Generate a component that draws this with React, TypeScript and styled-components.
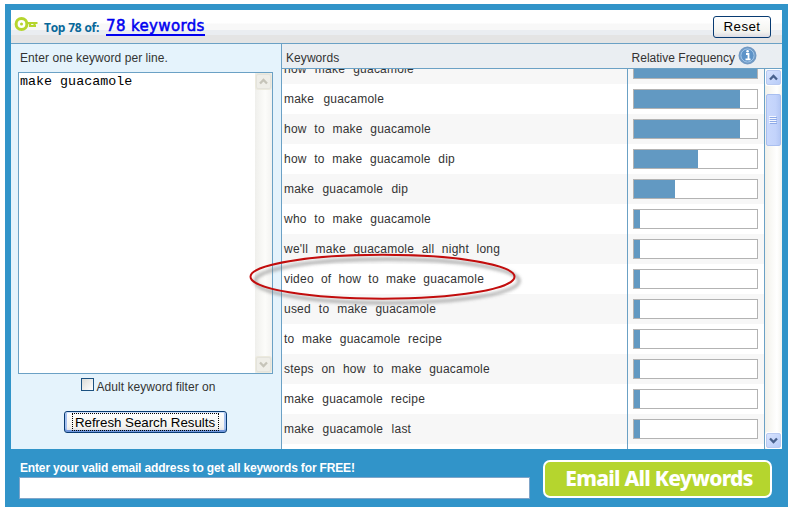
import React from 'react';
import styled, { createGlobalStyle } from 'styled-components';

const Global = createGlobalStyle`
  * { box-sizing: border-box; }
  body { margin: 0; background: #fff; font-family: "Liberation Sans", Arial, sans-serif; font-size: 12px; color: #333; overflow: hidden; }
  button, input, textarea { font: inherit; margin: 0; outline: none; }
`;

const Frame = styled.div`
  position: relative;
  width: 783px;
  height: 503px;
  margin: 4px 0 0 5px;
  padding: 6px 6px 0;
  background: #3194c9;
`;
const Header = styled.header`
  display: flex;
  align-items: center;
  height: 34px;
  padding: 0 11px 0 3px;
  border-bottom: 1px solid #6ba1c5;
  background: linear-gradient(#fff 0 13px, #f8f8f8 14px 20px, #eaedf1 20px 25px, #e4e4e4 25px);
`;
const KeyIcon = styled.svg`
  flex: none;
  width: 25px;
  height: 16px;
  margin-bottom: 5px;
`;
const Count = styled.span`
  margin: 2px 0 0 5px;
  width: 62px;
  font: bold 12px "Open Sans", sans-serif;
  letter-spacing: -0.3px;
  word-spacing: 0.3px;
  white-space: nowrap;
  color: #08689a;
`;
const CountLink = styled.a`
  margin-right: auto;
  padding-top: 1px;
  border-bottom: 2px solid #0000f0;
  font: 15px/16px "DejaVu Sans", sans-serif;
  letter-spacing: 0.36px;
  -webkit-text-stroke: 0.5px #0000f0;
  color: #0000f0;
  white-space: nowrap;
`;
const XpButton = styled.button<{ $focused?: boolean }>`
  display: flex;
  align-items: center;
  justify-content: center;
  width: ${p => (p.$focused ? 163 : 58)}px;
  height: 22px;
  margin-right: ${p => (p.$focused ? 2 : 0)}px;
  padding: 0;
  border: 1px solid #083b72;
  border-radius: 3px;
  background: linear-gradient(#fff, #f3f3ef 75%, #dcdbe2);
  box-shadow: ${p => (p.$focused ? 'inset 0 1px #cee0fb, inset 0 -2px #7096dc, inset 2px 0 #a7c2f0, inset -2px 0 #a7c2f0' : 'none')};
  font-size: 13.33px;
  letter-spacing: ${p => (p.$focused ? -0.03 : 0.45)}px;
  color: #000;
  white-space: nowrap;
`;
const FocusRing = styled.span`
  width: 147px;
  height: 18px;
  border: 1px dotted #000;
  line-height: 18px;
`;
const Main = styled.main`
  display: grid;
  grid-template: 405px / 270px 501px;
`;
const Query = styled.section`
  display: flex;
  flex-direction: column;
  align-items: center;
  background: #e5f3fc;
`;
const Hint = styled.label`
  align-self: flex-start;
  margin-left: 9px;
  height: 28px;
  line-height: 28px;
  letter-spacing: 0.07px;
`;
const Editor = styled.div`
  display: flex;
  align-self: flex-start;
  width: 255px;
  height: 302px;
  margin-left: 7px;
  border: 1px solid #6ba1c5;
  background: #fff;
`;
const EditorText = styled.textarea`
  flex: 1;
  min-width: 0;
  padding: 1px 0 0 1px;
  border: 0;
  resize: none;
  overflow: hidden;
  background: transparent;
  font: 13.33px/15px "Liberation Mono", monospace;
  letter-spacing: 0.02px;
  color: #000;
`;
const Track = styled.div<{ $disabled?: boolean }>`
  display: flex;
  flex-direction: column;
  justify-content: space-between;
  width: 17px;
  padding: 1px 0;
  background: ${p => (p.$disabled ? 'linear-gradient(90deg, #efefec, #fcfcfa 60%, #f2f2f0)' : 'linear-gradient(90deg, #f2f1ea, #fff 70%, #f4f4ef)')};
`;
const Arrow = styled.div<{ $disabled?: boolean }>`
  display: flex;
  flex: none;
  align-items: center;
  justify-content: center;
  width: 15px;
  height: 15px;
  margin: 0 1px;
  border: 1px solid ${p => (p.$disabled ? '#e4e3dc' : '#b9caf1')};
  border-radius: 2px;
  background: ${p => (p.$disabled ? '#efeee8' : 'linear-gradient(135deg, #d8e3fe, #b8ccf8)')};
  box-shadow: 0 0 0 1px ${p => (p.$disabled ? '#eceade' : '#fff')};
`;
const Thumb = styled.div`
  display: grid;
  place-content: center;
  gap: 1px;
  width: 15px;
  height: 52px;
  margin: 9px 1px auto;
  border: 1px solid #a9bff0;
  border-radius: 2px;
  background: linear-gradient(90deg, #c9d8fc, #c3d3fb 65%, #b5c8f5);
  i { width: 7px; height: 1px; background: #8fabe8; box-shadow: -1px -1px #f4f7ff; }
`;
const Filter = styled.label`
  display: flex;
  gap: 3px;
  height: 13px;
  margin: 4px 0 20px 4px;
  line-height: 19px;
  letter-spacing: 0.04px;
`;
const Check = styled.span`
  width: 13px;
  height: 13px;
  border: 1px solid #1c5180;
  background: linear-gradient(135deg, #dcdcd7, #fff);
`;
const Results = styled.section`
  display: flex;
  flex-direction: column;
  min-width: 0;
  border-left: 1px solid #6ba1c5;
`;
const ResultsHead = styled.div`
  display: flex;
  flex: none;
  justify-content: space-between;
  height: 25px;
  padding: 0 25px 0 4px;
  border-bottom: 1px solid #6ba1c5;
  background: #eaeef2;
  line-height: 28px;
  letter-spacing: 0.07px;
`;
const HeadCell = styled.div`
  display: flex;
  gap: 3px;
  letter-spacing: 0;
  svg { margin-top: 2px; }
`;
const ListArea = styled.div`
  display: flex;
  flex: 1;
  min-height: 0;
`;
const List = styled.div`
  width: 483px;
  border-right: 1px solid #6ba1c5;
  overflow: hidden;
`;
const Rows = styled.div`
  margin-top: -15px;
`;
const Row = styled.div`
  display: grid;
  grid-template-columns: 345px 1fr;
  height: 30px;
  background: #fff;
  &:nth-child(odd) { background: #f7f7f7; }
`;
const Term = styled.div<{ $gap: number }>`
  padding-left: 2px;
  line-height: 31px;
  letter-spacing: 0.22px;
  word-spacing: ${p => p.$gap}px;
  white-space: nowrap;
`;
const Meter = styled.div`
  padding: 5px 6px 5px 5px;
  border-left: 1px solid #6ba1c5;
`;
const Bar = styled.div`
  width: 125px;
  height: 20px;
  border: 1px solid #b3b3b3;
  background: #fff;
`;
const Fill = styled.div`
  height: 100%;
  background: #6299c2;
`;
const Footer = styled.footer`
  display: flex;
  justify-content: space-between;
  padding: 11px 10px 0 8px;
`;
const EmailLabel = styled.label`
  display: block;
  padding: 1px 0 0 1px;
  font-weight: bold;
  line-height: 14px;
  letter-spacing: -0.155px;
  color: #fff;
  white-space: nowrap;
`;
const EmailInput = styled.input`
  display: block;
  width: 511px;
  height: 22px;
  margin-top: 2px;
  border: 1px solid #7fa5c9;
  background: #fff;
`;
const EmailButton = styled.button`
  width: 229px;
  height: 38px;
  padding: 0 0 3px 3px;
  border: 2px solid #fff;
  border-radius: 7px;
  background: #b5d52e;
  font: 800 21px/30px "Noto Sans", sans-serif;
  letter-spacing: -0.75px;
  color: #fff;
  white-space: nowrap;
`;
const Callout = styled.svg`
  position: absolute;
  left: 240px;
  top: 244px;
  width: 290px;
  height: 62px;
  pointer-events: none;
`;

const Chevron = ({ down, muted }: { down?: boolean; muted?: boolean }) => (
  <svg width="9" height="7" viewBox="0 0 9 7">
    <path d={down ? 'M1 1.5 4.5 5 8 1.5' : 'M1 5.5 4.5 2 8 5.5'} fill="none" stroke={muted ? '#c6c4b9' : '#48618d'} strokeWidth="2.3" />
  </svg>
);

const terms: { text: string; value: number; gap: number }[] = [
  { text: 'how make guacamole', value: 123, gap: 4.6 },
  { text: 'make guacamole', value: 106, gap: 5.6 },
  { text: 'how to make guacamole', value: 106, gap: 4.1 },
  { text: 'how to make guacamole dip', value: 64, gap: 4 },
  { text: 'make guacamole dip', value: 41, gap: 4.7 },
  { text: 'who to make guacamole', value: 6, gap: 4.1 },
  { text: "we'll make guacamole all night long", value: 6, gap: 4 },
  { text: 'video of how to make guacamole', value: 6, gap: 3.6 },
  { text: 'used to make guacamole', value: 6, gap: 4.4 },
  { text: 'to make guacamole recipe', value: 6, gap: 4 },
  { text: 'steps on how to make guacamole', value: 6, gap: 4.1 },
  { text: 'make guacamole recipe', value: 6, gap: 4.5 },
  { text: 'make guacamole last', value: 6, gap: 4.8 },
];

export default function App() {
  return (
    <>
      <Global />
      <Frame>
        <Header>
          <KeyIcon viewBox="0 0 25 16">
            <circle cx="7.5" cy="8" r="5.4" fill="#fff" stroke="#b5d52e" strokeWidth="3" />
            <circle cx="7.5" cy="8" r="1.5" fill="#b5d52e" />
            <path d="M13 7h10.5M15.5 10h6.5M16 7v4M20.5 7v4" fill="none" stroke="#b5d52e" strokeWidth="2.2" />
          </KeyIcon>
          <Count>Top 78 of:</Count>
          <CountLink>78 keywords</CountLink>
          <XpButton>Reset</XpButton>
        </Header>
        <Main>
          <Query>
            <Hint>Enter one keyword per line.</Hint>
            <Editor>
              <EditorText defaultValue="make guacamole" spellCheck={false} />
              <Track $disabled>
                <Arrow $disabled><Chevron muted /></Arrow>
                <Arrow $disabled><Chevron down muted /></Arrow>
              </Track>
            </Editor>
            <Filter><Check />Adult keyword filter on</Filter>
            <XpButton $focused><FocusRing>Refresh Search Results</FocusRing></XpButton>
          </Query>
          <Results>
            <ResultsHead>
              <span>Keywords</span>
              <HeadCell>
                Relative Frequency
                <svg width="19" height="19" viewBox="0 0 19 19">
                  <circle cx="9.5" cy="9.5" r="8" fill="#5d93c8" stroke="#7199c3" strokeWidth="2" />
                  <circle cx="9.5" cy="9.5" r="6.6" fill="none" stroke="#a5c8e9" />
                  <path d="M8 8h2.5v5M7.5 13.3h5" fill="none" stroke="#fff" strokeWidth="1.8" />
                  <circle cx="9.6" cy="5.2" r="1.3" fill="#fff" />
                </svg>
              </HeadCell>
            </ResultsHead>
            <ListArea>
              <List>
                <Rows>
                  {terms.map(({ text, value, gap }) => (
                    <Row key={text}>
                      <Term $gap={gap}>{text}</Term>
                      <Meter><Bar><Fill style={{ width: value }} /></Bar></Meter>
                    </Row>
                  ))}
                  <Row><Term $gap={0} /><Meter /></Row>
                </Rows>
              </List>
              <Track>
                <Arrow><Chevron /></Arrow>
                <Thumb><i /><i /><i /><i /></Thumb>
                <Arrow><Chevron down /></Arrow>
              </Track>
            </ListArea>
          </Results>
        </Main>
        <Footer>
          <div>
            <EmailLabel>Enter your valid email address to get all keywords for FREE!</EmailLabel>
            <EmailInput />
          </div>
          <EmailButton>Email All Keywords</EmailButton>
        </Footer>
        <Callout viewBox="0 0 290 62">
          <defs>
            <filter id="soft" x="-10%" y="-20%" width="120%" height="150%"><feGaussianBlur stdDeviation="1.8" /></filter>
          </defs>
          <ellipse cx="142" cy="33" rx="132" ry="22" fill="none" stroke="#777" strokeOpacity=".45" strokeWidth="4" filter="url(#soft)" />
          <ellipse cx="137.5" cy="28.7" rx="132" ry="22" fill="none" stroke="#c20d0d" strokeWidth="2" />
        </Callout>
      </Frame>
    </>
  );
}
